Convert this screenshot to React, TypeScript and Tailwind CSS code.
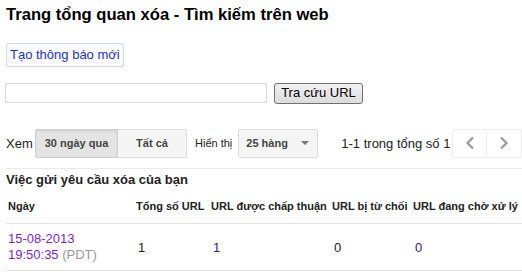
import React from 'react';

const Chevron: React.FC<{ dir: 'left' | 'right' }> = ({ dir }) => (
  <svg width="10" height="14" viewBox="0 0 10 14" fill="none">
    <path
      d={dir === 'left' ? 'M8 1.5 L2.5 7 L8 12.5' : 'M2 1.5 L7.5 7 L2 12.5'}
      stroke="#9a9a9a"
      strokeWidth="2.2"
    />
  </svg>
);

const App: React.FC = () => {
  return (
    <div
      className="w-[522px] h-[274px] bg-white text-[#222] overflow-hidden"
      style={{ fontFamily: '"Liberation Sans", Arial, sans-serif' }}
    >
      <h1 className="pl-[6px] pt-[5px] text-[16.6px] leading-[20px] font-bold text-black whitespace-nowrap">
        Trang tổng quan xóa - Tìm kiếm trên web
      </h1>

      <div className="pl-[6px] mt-[17px]">
        <button className="h-[24px] px-[3px] border border-[#d4d4f4] rounded-[2px] bg-[#fbfbff] text-[13px] text-[#2233cc]">
          Tạo thông báo mới
        </button>
      </div>

      <div className="flex items-center pl-[5px] mt-[16px] gap-[7px]">
        <div className="w-[262px] h-[20px] border border-[#d9d9d9] bg-white" />
        <button className="h-[21px] w-[89px] rounded-[3px] border border-[#707070] bg-gradient-to-b from-[#f2f2f2] to-[#dcdcdc] text-[13px] text-black leading-[18px]">
          Tra cứu URL
        </button>
      </div>

      <div className="flex items-center pl-[6px] mt-[25px] h-[29px] whitespace-nowrap">
        <span className="w-[29px] shrink-0 text-[13px] text-[#222]">Xem</span>
        <div className="flex shrink-0 h-[29px] text-[11px] font-bold text-[#444]">
          <div className="w-[83px] flex items-center justify-center bg-[#e4e4e4] border border-[#cfcfcf] rounded-l-[2px] shadow-[inset_0_1px_2px_rgba(0,0,0,0.1)]">
            30 ngày qua
          </div>
          <div className="w-[69px] flex items-center justify-center bg-[#f5f5f5] border border-l-0 border-[#dcdcdc] rounded-r-[2px]">
            Tất cả
          </div>
        </div>
        <span className="shrink-0 ml-[8px] mr-[6px] text-[11px] text-[#222]">Hiển thị</span>
        <div className="w-[80px] shrink-0 h-[29px] flex items-center justify-between pl-[7px] pr-[8px] bg-[#f5f5f5] border border-[#dcdcdc] rounded-[2px] text-[11px] font-bold text-[#444]">
          <span>25 hàng</span>
          <span className="w-0 h-0 border-l-[4px] border-r-[4px] border-t-[4px] border-l-transparent border-r-transparent border-t-[#777]" />
        </div>
        <span className="ml-[23px] shrink-0 text-[13px] text-[#222]">1-1 trong tổng số 1</span>
        <div className="flex shrink-0 ml-auto h-[29px]">
          <div className="w-[35px] flex items-center justify-center border border-[#ececec] rounded-l-[2px]">
            <Chevron dir="left" />
          </div>
          <div className="w-[35px] flex items-center justify-center border border-l-0 border-[#ececec] rounded-r-[2px]">
            <Chevron dir="right" />
          </div>
        </div>
      </div>

      <div className="ml-[6px] mt-[10px] border-t border-[#ebebeb]" />

      <h2 className="pl-[6px] pt-[3px] text-[13px] leading-[16px] font-bold text-[#222]">
        Việc gửi yêu cầu xóa của bạn
      </h2>

      <table className="ml-[6px] mt-[1px] w-[516px] table-fixed border-collapse">
        <colgroup>
          <col className="w-[130px]" />
          <col className="w-[75px]" />
          <col className="w-[121px]" />
          <col className="w-[81px]" />
          <col className="w-[109px]" />
        </colgroup>
        <thead>
          <tr className="h-[35px] text-[11px] font-bold text-[#222] text-left border-b border-[#e5e5e5]">
            <th className="pl-[2px] font-bold">Ngày</th>
            <th className="font-bold whitespace-nowrap">Tổng số URL</th>
            <th className="font-bold whitespace-nowrap">URL được chấp thuận</th>
            <th className="font-bold whitespace-nowrap">URL bị từ chối</th>
            <th className="font-bold whitespace-nowrap">URL đang chờ xử lý</th>
          </tr>
        </thead>
        <tbody>
          <tr className="h-[47px] text-[13px] border-b border-[#e5e5e5]">
            <td className="pl-[2px] leading-[16px] text-[#7a1fd6]">
              15-08-2013
              <br />
              19:50:35 <span className="text-[#999]">(PDT)</span>
            </td>
            <td className="pl-[2px] text-[#222]">1</td>
            <td className="pl-[2px] text-[#3a1a7a]">1</td>
            <td className="pl-[2px] text-[#222]">0</td>
            <td className="pl-[2px] text-[#3a1a7a]">0</td>
          </tr>
        </tbody>
      </table>
    </div>
  );
};

export default App;
